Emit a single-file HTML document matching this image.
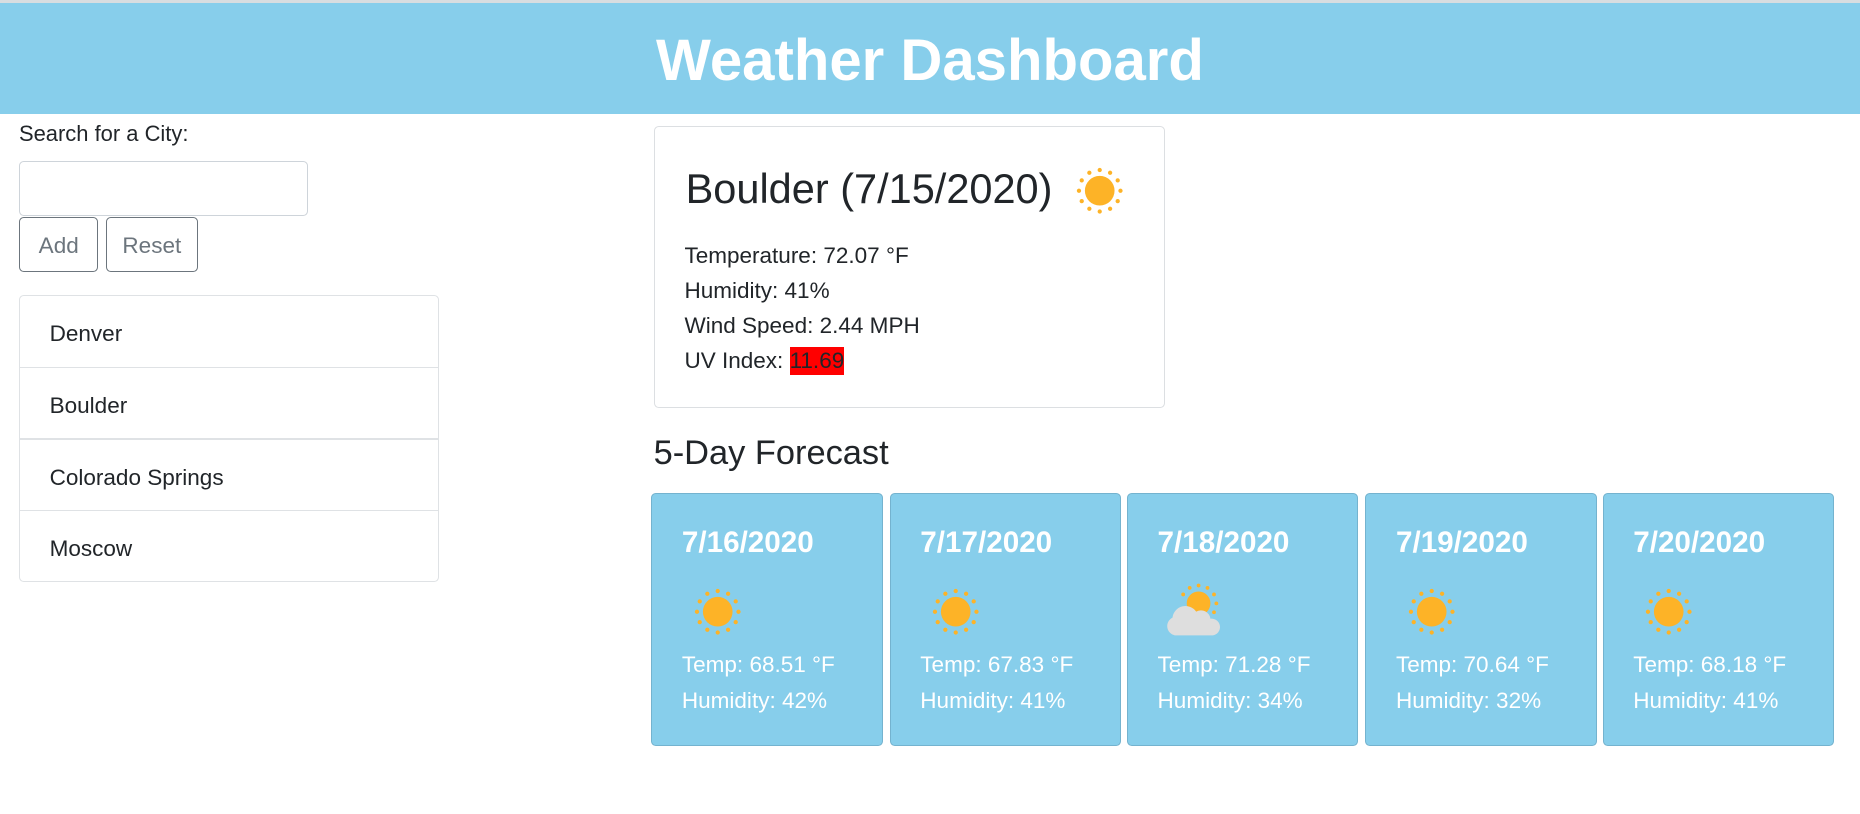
<!DOCTYPE html>
<html><head><meta charset="utf-8">
<style>
html,body{margin:0;padding:0;background:#fff;overflow:hidden}
body{width:1860px;height:814px}
#w{zoom:1.18622;width:1568px;height:686px;position:relative;font-family:"Liberation Sans",sans-serif;color:#212529}
.a{position:absolute}
#hdr{left:0;top:0;width:1568px;height:96px;background:#87ceeb;border-top:3px solid #d8dde0;box-sizing:border-box}
#hdr h1{margin:0;text-align:center;color:#fff;font-size:49px;font-weight:bold;line-height:98px}
.btn{border:1px solid #6c757d;border-radius:4px;color:#6c757d;font-size:19px;text-align:center;line-height:48px;box-sizing:border-box}
.li{left:16px;width:354px;height:61px;border:1px solid #dfe2e5;box-sizing:border-box;font-size:19px;line-height:64px;padding-left:25px}
.fc{top:416px;width:195px;height:213px;background:#87ceeb;border:1px solid #74b3cf;border-radius:4px;box-sizing:border-box;color:#fff}
.fc .d{position:absolute;left:25px;top:27px;font-size:25px;font-weight:bold}
.fc .t{position:absolute;left:25px;top:129px;font-size:19px;line-height:30px}
.fc svg{position:absolute;left:35px;top:79px}
.ln{font-size:19px;line-height:29.5px}
</style></head><body><div id="w">
<div id="hdr" class="a"><h1>Weather Dashboard</h1></div>
<div class="a" style="left:16px;top:102px;font-size:18.5px">Search for a City:</div>
<div class="a" style="left:16px;top:136px;width:244px;height:46px;border:1px solid #ced4da;border-radius:4px;box-sizing:border-box"></div>
<div class="a btn" style="left:16px;top:183px;width:67px;height:46px">Add</div>
<div class="a btn" style="left:89px;top:183px;width:78px;height:46px">Reset</div>
<div class="a li" style="top:249px;border-radius:4px 4px 0 0">Denver</div>
<div class="a li" style="top:309px">Boulder</div>
<div class="a li" style="top:370px">Colorado Springs</div>
<div class="a li" style="top:430px;border-radius:0 0 4px 4px">Moscow</div>

<div class="a" style="left:551px;top:106px;width:431px;height:238px;border:1px solid #dcdfe2;border-radius:4px;box-sizing:border-box"></div>
<div class="a" style="left:578px;top:139px;font-size:35px;font-weight:500">Boulder (7/15/2020)</div>
<svg class="a" style="left:907px;top:141px" width="40" height="40" viewBox="0 0 40 40"><g fill="#fdb327"><circle cx="20" cy="20" r="12.5"/><g id="r"><circle cx="20" cy="2.5" r="1.8"/><circle cx="28.75" cy="4.84" r="1.8"/><circle cx="35.16" cy="11.25" r="1.8"/><circle cx="37.5" cy="20" r="1.8"/><circle cx="35.16" cy="28.75" r="1.8"/><circle cx="28.75" cy="35.16" r="1.8"/><circle cx="20" cy="37.5" r="1.8"/><circle cx="11.25" cy="35.16" r="1.8"/><circle cx="4.84" cy="28.75" r="1.8"/><circle cx="2.5" cy="20" r="1.8"/><circle cx="4.84" cy="11.25" r="1.8"/><circle cx="11.25" cy="4.84" r="1.8"/></g></g></svg>
<div class="a ln" style="left:577px;top:201px">Temperature: 72.07 °F<br>Humidity: 41%<br>Wind Speed: 2.44 MPH<br>UV Index: <span style="background:#f00;padding:1px 0">11.69</span></div>

<div class="a" style="left:551px;top:366px;font-size:29px;font-weight:500">5-Day Forecast</div>

<div class="a fc" style="left:549px"><div class="d">7/16/2020</div><svg width="40" height="40" viewBox="0 0 40 40"><g fill="#fdb327"><use href="#r"/><circle cx="20" cy="20" r="12.5"/></g></svg><div class="t">Temp: 68.51 °F<br>Humidity: 42%</div></div>
<div class="a fc" style="left:750px"><div class="d">7/17/2020</div><svg width="40" height="40" viewBox="0 0 40 40"><g fill="#fdb327"><use href="#r"/><circle cx="20" cy="20" r="12.5"/></g></svg><div class="t">Temp: 67.83 °F<br>Humidity: 41%</div></div>
<div class="a fc" style="left:950px"><div class="d">7/18/2020</div><svg style="left:30px;top:74px" width="50" height="50" viewBox="0 0 50 50"><g fill="#fdb327"><circle cx="30" cy="18" r="10"/><circle cx="30" cy="3" r="1.6"/><circle cx="37.5" cy="5" r="1.6"/><circle cx="43" cy="10.5" r="1.6"/><circle cx="45" cy="18" r="1.6"/><circle cx="43" cy="25.5" r="1.6"/><circle cx="22.5" cy="5" r="1.6"/><circle cx="17" cy="10.5" r="1.6"/></g><path fill="#dedede" d="M10 45 a8 8 0 0 1 -2 -15 a11 11 0 0 1 20 -5 a8 8 0 0 1 12 6 a7 7 0 0 1 2 14 z"/></svg><div class="t">Temp: 71.28 °F<br>Humidity: 34%</div></div>
<div class="a fc" style="left:1151px"><div class="d">7/19/2020</div><svg width="40" height="40" viewBox="0 0 40 40"><g fill="#fdb327"><use href="#r"/><circle cx="20" cy="20" r="12.5"/></g></svg><div class="t">Temp: 70.64 °F<br>Humidity: 32%</div></div>
<div class="a fc" style="left:1351px"><div class="d">7/20/2020</div><svg width="40" height="40" viewBox="0 0 40 40"><g fill="#fdb327"><use href="#r"/><circle cx="20" cy="20" r="12.5"/></g></svg><div class="t">Temp: 68.18 °F<br>Humidity: 41%</div></div>
</div></body></html>
